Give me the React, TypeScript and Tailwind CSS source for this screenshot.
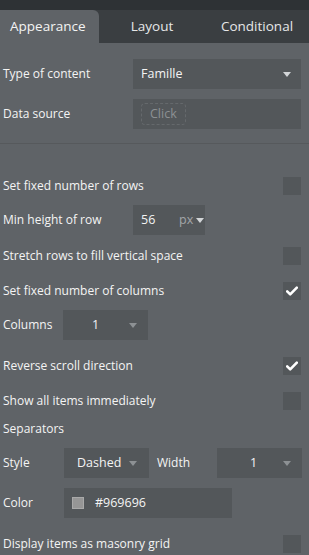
import React from "react";

const font = { fontFamily: '"Open Sans", "Noto Sans", sans-serif' };

function Caret({ light = false }: { light?: boolean }) {
  return (
    <svg width="8" height="5" viewBox="0 0 8 5" aria-hidden="true">
      <path d="M0 0h8L4 5z" fill={light ? "#d3d6d8" : "#8d9194"} />
    </svg>
  );
}

function Checkbox({ checked = false }: { checked?: boolean }) {
  return (
    <div className="flex h-[18px] w-[18px] shrink-0 items-center justify-center bg-[#53575a]">
      {checked ? (
        <svg width="12" height="10" viewBox="0 0 12 10" aria-hidden="true">
          <path d="M1.2 5.4l3 3L10.8 1.6" fill="none" stroke="#ffffff" strokeWidth="2.6" strokeLinecap="round" strokeLinejoin="round" />
        </svg>
      ) : null}
    </div>
  );
}

function CheckRow({ label, checked, className }: { label: string; checked?: boolean; className: string }) {
  return (
    <div className={`flex h-[18px] items-center justify-between pr-[8px] ${className}`}>
      <span>{label}</span>
      <Checkbox checked={checked} />
    </div>
  );
}

export default function App() {
  return (
    <div className="h-[555px] w-[309px] overflow-hidden bg-[#5f6367] text-[12px] text-[#f4f4f4]" style={font}>
      <div className="h-[10px] bg-[#2e3235]" />
      <div className="flex h-[33px] bg-[#3a3e41] text-[13.5px]">
        <div className="flex w-[99px] items-center rounded-tr-[6px] bg-[#5f6367] pl-[10px]">Appearance</div>
        <div className="flex w-[106px] items-center justify-center text-[#e6e7e8]">Layout</div>
        <div className="flex flex-1 items-center justify-center text-[#e6e7e8]">Conditional</div>
      </div>

      <div className="flex flex-col pl-[3px]">
        <div className="mt-[16px] flex h-[30px] items-center justify-between pr-[8px]">
          <span>Type of content</span>
          <div className="flex h-[30px] w-[168px] items-center justify-between bg-[#53575a] pl-[8px] pr-[10px] text-[12.5px]">
            <span>Famille</span>
            <Caret light />
          </div>
        </div>
        <div className="mt-[10px] flex h-[30px] items-center justify-between pr-[8px]">
          <span>Data source</span>
          <div className="flex h-[30px] w-[168px] items-center bg-[#53575a] pl-[8px]">
            <span className="rounded-[4px] border border-dashed border-[#65696c] px-[8px] py-[1px] text-[12.5px] text-[#8c9093]">Click</span>
          </div>
        </div>
      </div>

      <div className="mt-[14px] h-px bg-[#56595c]" />

      <div className="flex flex-col pl-[3px]">
        <CheckRow label="Set fixed number of rows" className="mt-[33px]" />
        <div className="mt-[10px] flex h-[30px] items-center">
          <span className="w-[130px]">Min height of row</span>
          <div className="flex h-[30px] w-[72px] items-center bg-[#53575a] pl-[8px] text-[12.5px]">
            <span className="w-[38px]">56</span>
            <span className="mr-[3px] text-[#a3a6a9]">px</span>
            <Caret light />
          </div>
        </div>
        <CheckRow label="Stretch rows to fill vertical space" className="mt-[12px]" />
        <CheckRow label="Set fixed number of columns" checked className="mt-[17px]" />
        <div className="mt-[10px] flex h-[30px] items-center">
          <span className="w-[60px]">Columns</span>
          <div className="flex h-[30px] w-[85px] items-center bg-[#53575a] pl-[29px] pr-[11px] text-[12.5px]">
            <span className="flex-1">1</span>
            <Caret />
          </div>
        </div>
        <CheckRow label="Reverse scroll direction" checked className="mt-[17px]" />
        <CheckRow label="Show all items immediately" className="mt-[17px]" />
        <div className="mt-[10px] flex h-[18px] items-center">Separators</div>
        <div className="mt-[10px] flex h-[30px] items-center">
          <span className="w-[61px]">Style</span>
          <div className="flex h-[30px] w-[85px] items-center bg-[#53575a] pl-[13px] pr-[12px] text-[12.5px]">
            <span className="flex-1">Dashed</span>
            <Caret />
          </div>
          <span className="ml-[8px] w-[60px]">Width</span>
          <div className="flex h-[30px] w-[85px] items-center bg-[#53575a] pl-[33px] pr-[11px] text-[12.5px]">
            <span className="flex-1">1</span>
            <Caret />
          </div>
        </div>
        <div className="mt-[10px] flex h-[30px] items-center">
          <span className="w-[61px]">Color</span>
          <div className="flex h-[30px] w-[168px] items-center bg-[#53575a] pl-[8px] text-[12.5px]">
            <span className="h-[12px] w-[12px] border border-[#a9a9a9] bg-[#969696]" />
            <span className="ml-[11px]">#969696</span>
          </div>
        </div>
        <CheckRow label="Display items as masonry grid" className="mt-[17px]" />
      </div>
    </div>
  );
}
